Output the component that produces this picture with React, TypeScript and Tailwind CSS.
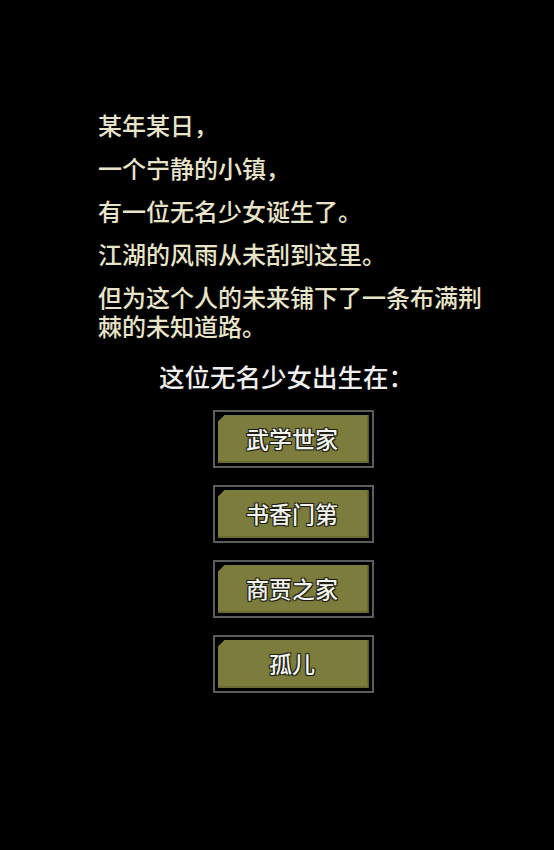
import React from 'react';

const story = [
  '某年某日，',
  '一个宁静的小镇，',
  '有一位无名少女诞生了。',
  '江湖的风雨从未刮到这里。',
  '但为这个人的未来铺下了一条布满荆棘的未知道路。',
];

const origins = ['武学世家', '书香门第', '商贾之家', '孤儿'];

const OriginButton: React.FC<{ label: string }> = ({ label }) => (
  <button className="w-[161px] h-[58px] border-2 border-[#5c5c5c] bg-black p-[3px]">
    <div className="w-full h-full bg-[#7c7d3c] flex items-center justify-center border-r-2 border-b-2 border-[#6a6b32] [clip-path:polygon(7px_0,100%_0,100%_100%,0_100%,0_7px)]">
      <span className="text-[23px] font-medium leading-none text-[#f4f4f0] [text-shadow:-1px_-1px_0_#1e1e14,1px_-1px_0_#1e1e14,-1px_1px_0_#1e1e14,1px_1px_0_#1e1e14,0_0_2px_#1e1e14]">
        {label}
      </span>
    </div>
  </button>
);

export default function App() {
  return (
    <div
      className="w-full min-h-[850px] bg-black pt-[110px]"
      style={{ fontFamily: '"Noto Sans CJK SC", "Noto Sans", sans-serif' }}
    >
      <div className="pl-[98px] pr-[70px] flex flex-col gap-[14px]">
        {story.map((line) => (
          <p key={line} className="text-[24px] font-medium leading-[29px] text-[#e8e4c9]">
            {line}
          </p>
        ))}
      </div>

      <h2 className="mt-[18px] pl-[159px] text-[25.5px] font-medium leading-[36px] text-[#efefef]">这位无名少女出生在：</h2>

      <div className="pl-[32px] mt-[16px] flex flex-col items-center gap-[17px]">
        {origins.map((o) => (
          <OriginButton key={o} label={o} />
        ))}
      </div>
    </div>
  );
}
